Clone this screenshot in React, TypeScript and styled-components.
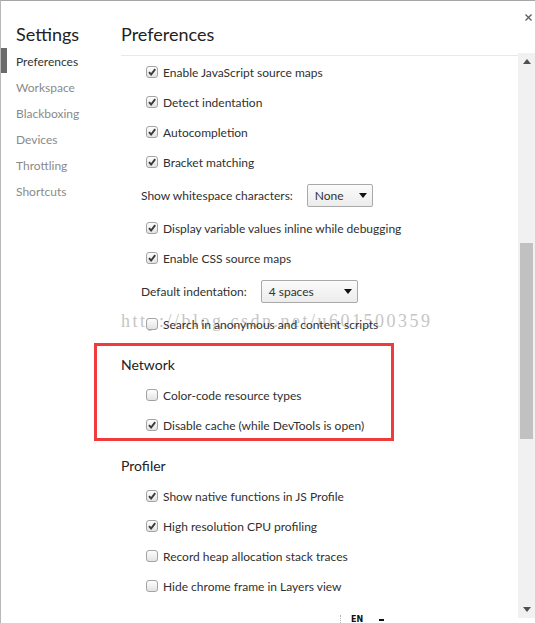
import React from 'react'
import styled, { createGlobalStyle, css } from 'styled-components'

const GlobalStyle = createGlobalStyle`
  html, body {
    margin: 0;
    padding: 0;
    background: #fff;
  }
  body {
    font-family: Lato, "Open Sans", sans-serif;
    color: #303030;
  }
`

function Checkbox({ checked }: { checked?: boolean }) {
  return (
    <Box width="12" height="12" viewBox="0 0 12 12">
      <defs>
        <linearGradient id="cbfill" x1="0" y1="0" x2="0" y2="1">
          <stop offset="0" stopColor="#ffffff" />
          <stop offset="1" stopColor="#e2e2e2" />
        </linearGradient>
      </defs>
      <rect x="0.5" y="0.5" width="11" height="11" rx="2.5" fill="url(#cbfill)" stroke="#a3a3a3" />
      {checked && (
        <path d="M3 6.2 L5.1 8.5 L9.2 3.2" fill="none" stroke="#3a3a3a" strokeWidth="1.9" />
      )}
    </Box>
  )
}

function Arrow({ down }: { down?: boolean }) {
  return (
    <svg width="8" height="5" viewBox="0 0 8 5">
      <path d={down ? 'M0 0 H8 L4 5 Z' : 'M0 5 H8 L4 0 Z'} fill="#505050" />
    </svg>
  )
}

function Option({ label, checked }: { label: string; checked?: boolean }) {
  return (
    <CheckRow>
      <Checkbox checked={checked} />
      {label}
    </CheckRow>
  )
}

function Dropdown({ label, value, width }: { label: string; value: string; width: number }) {
  return (
    <SelectRow>
      {label}
      <Select $width={width}>
        {value}
        <svg width="8" height="5" viewBox="0 0 8 5">
          <path d="M0 0 H8 L4 5 Z" fill="#111" />
        </svg>
      </Select>
    </SelectRow>
  )
}

export default function App() {
  return (
    <>
      <GlobalStyle />
      <Frame>
        <Sidebar>
          <SidebarTitle>Settings</SidebarTitle>
          <Nav>
            <NavItem $active>Preferences</NavItem>
            <NavItem>Workspace</NavItem>
            <NavItem>Blackboxing</NavItem>
            <NavItem>Devices</NavItem>
            <NavItem>Throttling</NavItem>
            <NavItem>Shortcuts</NavItem>
          </Nav>
        </Sidebar>

        <Main>
          <Header>Preferences</Header>
          <Content>
            <Option checked label="Enable JavaScript source maps" />
            <Option checked label="Detect indentation" />
            <Option checked label="Autocompletion" />
            <Option checked label="Bracket matching" />
            <Dropdown label="Show whitespace characters:" value="None" width={66} />
            <Option checked label="Display variable values inline while debugging" />
            <Option checked label="Enable CSS source maps" />
            <Dropdown label="Default indentation:" value="4 spaces" width={97} />
            <Option label="Search in anonymous and content scripts" />

            <Section>
              <Highlight />
              <SectionTitle>Network</SectionTitle>
              <Option label="Color-code resource types" />
              <Option checked label="Disable cache (while DevTools is open)" />
            </Section>

            <Section>
              <SectionTitle>Profiler</SectionTitle>
              <Option checked label="Show native functions in JS Profile" />
              <Option checked label="High resolution CPU profiling" />
              <Option label="Record heap allocation stack traces" />
              <Option label="Hide chrome frame in Layers view" />
            </Section>
          </Content>

          <Scrollbar>
            <ScrollButton>
              <Arrow />
            </ScrollButton>
            <Track>
              <Thumb />
            </Track>
            <ScrollButton>
              <Arrow down />
            </ScrollButton>
          </Scrollbar>
        </Main>

        <Close aria-label="Close">
          <svg width="7" height="7" viewBox="0 0 7 7">
            <path d="M0.5 0.5 L6.5 6.5 M6.5 0.5 L0.5 6.5" stroke="#5a5a5a" strokeWidth="1.2" />
          </svg>
        </Close>

        <Watermark>http://blog.csdn.net/u601500359</Watermark>
        <TrayBit>EN</TrayBit>
      </Frame>
    </>
  )
}

const Frame = styled.div`
  position: relative;
  z-index: 0;
  width: 535px;
  height: 623px;
  box-sizing: border-box;
  border-top: 1px solid #a6a6a6;
  border-left: 1px solid #b8b8b8;
  display: grid;
  grid-template-columns: 120px 1fr;
  overflow: hidden;
  background: #fff;
`

const Sidebar = styled.aside`
  padding: 21px 0 0 15px;
`

const SidebarTitle = styled.h1`
  margin: 0;
  font-size: 18px;
  font-weight: 400;
  line-height: 24px;
  color: #222;
`

const Nav = styled.ul`
  list-style: none;
  margin: 3px 0 0;
  padding: 0;
`

const NavItem = styled.li<{ $active?: boolean }>`
  position: relative;
  height: 26px;
  line-height: 26px;
  font-size: 12px;
  color: #8a8a8a;

  ${p =>
    p.$active &&
    css`
      color: #333;
      &::before {
        content: '';
        position: absolute;
        left: -16px;
        top: -1px;
        width: 7px;
        height: 25px;
        background: #6b6b6b;
      }
    `}
`

const Main = styled.main`
  display: grid;
  grid-template-columns: 1fr 17px;
  grid-template-rows: 55px 1fr;
  min-height: 0;
`

const Header = styled.header`
  grid-column: 1;
  grid-row: 1;
  box-sizing: border-box;
  height: 55px;
  padding-top: 21px;
  border-bottom: 1px solid #e8e8e8;
  font-size: 18px;
  line-height: 24px;
  color: #222;
`

const Content = styled.div`
  grid-column: 1;
  grid-row: 2;
  padding-top: 1px;
`

const CheckRow = styled.label`
  display: flex;
  align-items: center;
  gap: 5px;
  height: 30px;
  padding-left: 25px;
  font-size: 12px;
  color: #303030;
  white-space: nowrap;
`

const Box = styled.svg`
  flex-shrink: 0;
`

const SelectRow = styled.div`
  display: flex;
  align-items: center;
  gap: 14px;
  height: 36px;
  padding-left: 20px;
  font-size: 12px;
  color: #303030;
  white-space: nowrap;
`

const Select = styled.div<{ $width: number }>`
  box-sizing: border-box;
  width: ${p => p.$width}px;
  height: 23px;
  display: flex;
  align-items: center;
  justify-content: space-between;
  padding: 0 5px 0 7px;
  border: 1px solid #a9a9a9;
  border-radius: 2px;
  background: linear-gradient(#fbfbfb, #ececec);
  font-size: 12px;
  color: #333;
`

const Section = styled.section`
  position: relative;
  padding-top: 12px;
`

const SectionTitle = styled.h2`
  margin: 0;
  height: 29px;
  line-height: 28px;
  font-size: 14px;
  font-weight: 400;
  color: #222;
`

const Highlight = styled.div`
  position: absolute;
  top: 4px;
  left: -27px;
  width: 300px;
  height: 98px;
  box-sizing: border-box;
  border: 3px solid #ef3b3b;
  pointer-events: none;
`

const Scrollbar = styled.div`
  grid-column: 2;
  grid-row: 2;
  margin: -3px 0 5px;
  display: flex;
  flex-direction: column;
  background: #f1f1f1;
`

const ScrollButton = styled.div`
  height: 17px;
  flex-shrink: 0;
  display: flex;
  align-items: center;
  justify-content: center;
`

const Track = styled.div`
  flex: 1;
  padding: 173px 2px 0;
`

const Thumb = styled.div`
  height: 196px;
  background: #c1c1c1;
`

const Close = styled.div`
  position: absolute;
  top: 13px;
  right: 3px;
  width: 7px;
  height: 7px;
  display: flex;
`

const Watermark = styled.div`
  position: absolute;
  z-index: -1;
  left: 120px;
  top: 311px;
  font-family: "Liberation Serif", serif;
  font-size: 18px;
  line-height: 18px;
  letter-spacing: 2.5px;
  color: #c6c6c6;
  white-space: nowrap;
`

const TrayBit = styled.div`
  position: absolute;
  left: 339px;
  bottom: -4px;
  height: 12px;
  padding-left: 10px;
  border-left: 1px dotted #b0b0b0;
  font-family: "DejaVu Sans", sans-serif;
  font-size: 8px;
  font-weight: 700;
  color: #111;

  &::after {
    content: '';
    display: inline-block;
    width: 5px;
    height: 2px;
    margin-left: 16px;
    vertical-align: middle;
    background: #111;
  }
`
